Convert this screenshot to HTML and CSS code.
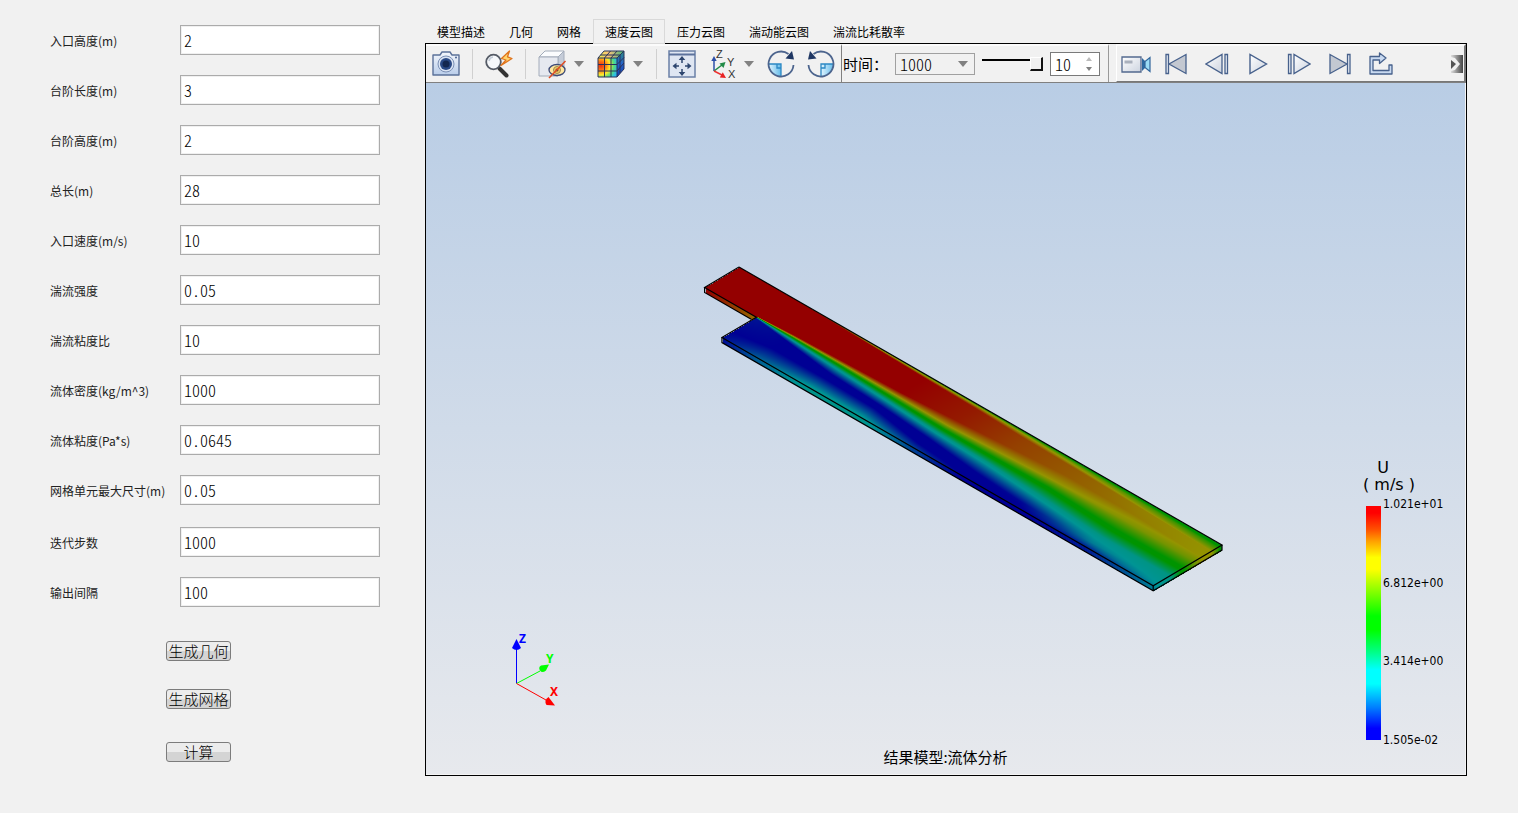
FILE: index.html
```html
<!DOCTYPE html>
<html lang="zh-CN">
<head>
<meta charset="utf-8">
<title>流体分析</title>
<link rel="stylesheet" href="styles.css">
</head>
<body>
<main class="app">
  <form class="panel">
    <div class="fields">
      <div class="field"><label for="inlet-h">入口高度(m)</label><input id="inlet-h" type="text" value="2"></div>
      <div class="field"><label for="step-l">台阶长度(m)</label><input id="step-l" type="text" value="3"></div>
      <div class="field"><label for="step-h">台阶高度(m)</label><input id="step-h" type="text" value="2"></div>
      <div class="field"><label for="total">总长(m)</label><input id="total" type="text" value="28"></div>
      <div class="field"><label for="speed">入口速度(m/s)</label><input id="speed" type="text" value="10"></div>
      <div class="field"><label for="turb">湍流强度</label><input id="turb" type="text" value="0.05"></div>
      <div class="field"><label for="ratio">湍流粘度比</label><input id="ratio" type="text" value="10"></div>
      <div class="field"><label for="density">流体密度(kg/m^3)</label><input id="density" type="text" value="1000"></div>
      <div class="field"><label for="visc">流体粘度(Pa*s)</label><input id="visc" type="text" value="0.0645"></div>
      <div class="field"><label for="mesh">网格单元最大尺寸(m)</label><input id="mesh" type="text" value="0.05"></div>
    </div>
    <div class="fields">
      <div class="field"><label for="iter">迭代步数</label><input id="iter" type="text" value="1000"></div>
      <div class="field"><label for="interval">输出间隔</label><input id="interval" type="text" value="100"></div>
    </div>
    <div class="actions">
      <button type="button" class="action">生成几何</button>
      <button type="button" class="action">生成网格</button>
      <button type="button" class="action action-run">计算</button>
    </div>
  </form>

  <section class="results">
    <div class="tabs" role="tablist">
      <button type="button" role="tab" class="tab">模型描述</button>
      <button type="button" role="tab" class="tab">几何</button>
      <button type="button" role="tab" class="tab">网格</button>
      <button type="button" role="tab" class="tab tab-active" aria-selected="true">速度云图</button>
      <button type="button" role="tab" class="tab">压力云图</button>
      <button type="button" role="tab" class="tab">湍动能云图</button>
      <button type="button" role="tab" class="tab">湍流比耗散率</button>
    </div>

    <div class="viewer">
      <div class="toolbar">
        <div class="bar bar-view">
          <button type="button" class="tool" aria-label="截图">
            <svg width="28" height="26" viewBox="0 0 28 26">
              <defs><linearGradient id="cam" x1="0" y1="0" x2="0" y2="1"><stop offset="0" stop-color="#f4f7fc"/><stop offset="1" stop-color="#b9cdea"/></linearGradient></defs>
              <path d="M1 4h7l2-3h8l2 3h7v20H1z" fill="url(#cam)" stroke="#5b7199" stroke-width="1.4" stroke-linejoin="round"/>
              <circle cx="14" cy="13" r="8" fill="#d9e3f3" stroke="#7b90b5"/>
              <circle cx="14" cy="13" r="6" fill="#2a4a86"/>
              <circle cx="14" cy="13" r="3.500" fill="#142850"/>
              <circle cx="24" cy="6.500" r="1" fill="#46608f"/>
            </svg>
          </button>
          <span class="sep"></span>
          <button type="button" class="tool" aria-label="快速缩放">
            <svg width="30" height="28" viewBox="0 0 30 28">
              <path d="M15.500 18.500l7 7" stroke="#333" stroke-width="4" stroke-linecap="round"/>
              <circle cx="9.500" cy="12" r="7.300" fill="#f6f8fb" stroke="#555b66" stroke-width="1.800"/>
              <path d="M5 11a5 5 0 0 1 4-4" fill="none" stroke="#c3ccd8" stroke-width="1.500"/>
              <path d="M25.500 1L17.500 8.500l4.500 1.500-5 5.500 11-7-4.500-1.700z" fill="#ffd36b" stroke="#e0741c" stroke-width="1.300" stroke-linejoin="round"/>
            </svg>
          </button>
          <span class="sep"></span>
          <button type="button" class="tool" aria-label="隐藏选择">
            <svg width="30" height="30" viewBox="0 0 30 30">
              <path d="M2 8l6-6h19l-6 6z" fill="#fbfcfe" stroke="#a3acba"/>
              <path d="M21 8l6-6v18l-6 7z" fill="#c5ccd8" stroke="#a3acba"/>
              <path d="M2 8h19v19H2z" fill="#e6e9f0" stroke="#a3acba"/>
              <ellipse cx="20" cy="21" rx="8" ry="5.500" fill="#ffe7a0" stroke="#3d4b78" stroke-width="1.300"/>
              <circle cx="20" cy="21" r="3.500" fill="#f5c95b" stroke="#9a8955"/>
              <circle cx="20" cy="21" r="1.500" fill="#544a3d"/>
              <path d="M28.500 12L12 29" stroke="#e04b22" stroke-width="1.500"/>
            </svg>
          </button>
          <button type="button" class="caret" aria-label="更多显示方式"></button>
          <button type="button" class="tool tool-next" aria-label="云图">
            <svg width="28" height="28" viewBox="0 0 28 28">
              <defs>
                <radialGradient id="heat" cx=".15" cy=".4" r="1"><stop offset="0" stop-color="#ee2a10"/><stop offset=".25" stop-color="#fb7a12"/><stop offset=".48" stop-color="#ffe92c"/><stop offset=".68" stop-color="#54df7a"/><stop offset=".9" stop-color="#27b8ee"/></radialGradient>
                <linearGradient id="heat-top"><stop offset="0" stop-color="#e5ef4a"/><stop offset=".4" stop-color="#ffc47a"/><stop offset="1" stop-color="#3bb078"/></linearGradient>
                <linearGradient id="heat-side" x1="0" y1="0" x2="0" y2="1"><stop offset="0" stop-color="#2c8a80"/><stop offset=".5" stop-color="#2463cc"/><stop offset="1" stop-color="#123ba8"/></linearGradient>
              </defs>
              <path d="M1 8l6-7h20l-7 7z" fill="url(#heat-top)"/>
              <path d="M20 8l7-7v18l-7 8z" fill="url(#heat-side)"/>
              <path d="M1 8h19v19H1z" fill="url(#heat)"/>
              <path d="M1 8l6-7h20v18l-7 8H1zM1 8h19v19M20 8l7-7M1 14.500h19l7-7M1 21h19l7-8M7.500 27V8l6-7M14 27V8l6-7M3.500 5h19.500v18" fill="none" stroke="#29335a" stroke-width="1"/>
            </svg>
          </button>
          <button type="button" class="caret" aria-label="更多云图"></button>
          <span class="sep sep-wide"></span>
          <button type="button" class="tool" aria-label="适应窗口">
            <svg width="28" height="28" viewBox="0 0 28 28">
              <rect x="1" y="1" width="26" height="26" fill="#dfe6f2" stroke="#6b80a7" stroke-width="1.500"/>
              <path d="M1 4.500h26" stroke="#5c729c" stroke-width="2"/>
              <path d="M14 6l3.300 4h-6.600zM14 26l3.300-4h-6.600zM4.500 16l4-3.300v6.600zM23.500 16l-4-3.300v6.600z" fill="#2e466f"/>
              <path d="M14 9v4M14 19v4M7 16h4M17 16h4" stroke="#2e466f" stroke-width="1.500"/>
            </svg>
          </button>
          <button type="button" class="tool" aria-label="视图方向">
            <svg width="28" height="36" viewBox="0 -4 28 36" class="axis-icon">
              <path d="M6 21V9" stroke="#2d4fa8" stroke-width="1.500"/><path d="M6 6l-2.700 5h5.400z" fill="#2d4fa8"/>
              <path d="M6 21l8-6" stroke="#218b47" stroke-width="1.500"/><path d="M17.500 12l-6 1.500 4 4.500z" fill="#218b47"/>
              <path d="M6 21l8 4" stroke="#e33" stroke-width="1.500"/><path d="M18 28l-6.200-.4 3-5.400z" fill="#e82222"/>
              <text x="8" y="8">Z</text><text x="19" y="16">Y</text><text x="20" y="28">X</text>
            </svg>
          </button>
          <button type="button" class="caret" aria-label="更多视图"></button>
          <button type="button" class="tool tool-next" aria-label="顺时针旋转">
            <svg width="28" height="28" viewBox="0 0 28 28">
              <defs><linearGradient id="wedge"><stop offset="0" stop-color="#e2f5fe"/><stop offset="1" stop-color="#64bbea"/></linearGradient></defs>
              <path d="M1.500 14h12.500v12.500A12.500 12.500 0 0 1 1.500 14z" fill="url(#wedge)"/>
              <path d="M2 14h12v12M10 14v4h4" fill="none" stroke="#2b88c4" stroke-width="1.300"/>
              <path d="M21.500 4A12.500 12.500 0 1 0 26.500 15" fill="none" stroke="#4c648d" stroke-width="1.800"/>
              <path d="M18.500 8.500l8.500 1-2-8.500z" fill="#1f3763"/>
            </svg>
          </button>
          <button type="button" class="tool tool-last" aria-label="逆时针旋转">
            <svg width="28" height="28" viewBox="0 0 28 28">
              <path d="M26.500 14H14v12.500A12.500 12.500 0 0 0 26.500 14z" fill="url(#wedge)"/>
              <path d="M26 14H14v12M18 14v4h-4" fill="none" stroke="#2b88c4" stroke-width="1.300"/>
              <path d="M6.500 4A12.500 12.500 0 1 1 1.500 15" fill="none" stroke="#4c648d" stroke-width="1.800"/>
              <path d="M9.500 8.500L1 9.500 3 1z" fill="#1f3763"/>
            </svg>
          </button>
        </div>

        <div class="bar bar-time">
          <label for="time" class="time-label">时间：</label>
          <span class="select-wrap"><select id="time" class="time-select"><option>1000</option></select></span>
          <input type="range" class="slider" aria-label="时间进度" min="0" max="10" value="10">
          <span class="spin">
            <input type="text" inputmode="numeric" class="spin-input" aria-label="帧" value="10">
            <svg width="8" height="16" viewBox="0 0 8 16"><path d="M4 1l3 4H1z" fill="#bbb"/><path d="M4 15l3-4H1z" fill="#808080"/></svg>
          </span>
        </div>

        <div class="bar bar-play">
          <button type="button" class="play play-record" aria-label="录制">
            <svg width="30" height="20" viewBox="0 0 30 20">
              <defs><linearGradient id="metal" x1="0" x2="1" y2="1"><stop offset="0" stop-color="#fff"/><stop offset="1" stop-color="#ccd3df"/></linearGradient></defs>
              <path d="M1 3h19v15H1z" fill="url(#metal)" stroke="#53698f" stroke-width="1.300"/>
              <path d="M3.500 6.500h8v3h-8z" fill="#aab1bd"/>
              <path d="M21 4l3.500 3.500v6L21 17z" fill="#2c68a0"/>
              <path d="M29 3.500v14l-5-4V7.500z" fill="#9bdcf6" stroke="#32669c" stroke-width="1.200"/>
            </svg>
          </button>
          <button type="button" class="play" aria-label="第一帧">
            <svg width="24" height="22" viewBox="0 0 24 22"><path d="M2 1.500h2.500v19H2z" fill="#e8edf5" stroke="#47618c" stroke-width="1.300"/><path d="M22 1.500v19L5 11z" fill="#c3c8d1" stroke="#47618c" stroke-width="1.300"/></svg>
          </button>
          <button type="button" class="play" aria-label="上一帧">
            <svg width="24" height="22" viewBox="0 0 24 22"><path d="M20 1.500h2.500v19H20z" fill="#e8edf5" stroke="#47618c" stroke-width="1.300"/><path d="M17 1.500v19L1 11z" fill="url(#metal)" stroke="#47618c" stroke-width="1.300"/></svg>
          </button>
          <button type="button" class="play" aria-label="播放">
            <svg width="20" height="22" viewBox="0 0 20 22"><path d="M2 1.500v19L18.500 11z" fill="url(#metal)" stroke="#47618c" stroke-width="1.400"/></svg>
          </button>
          <button type="button" class="play" aria-label="下一帧">
            <svg width="24" height="22" viewBox="0 0 24 22"><path d="M1.500 1.500H4v19H1.500z" fill="#e8edf5" stroke="#47618c" stroke-width="1.300"/><path d="M7 1.500v19L23 11z" fill="url(#metal)" stroke="#47618c" stroke-width="1.300"/></svg>
          </button>
          <button type="button" class="play" aria-label="最后一帧">
            <svg width="24" height="22" viewBox="0 0 24 22"><path d="M19.500 1.500H22v19h-2.500z" fill="#e8edf5" stroke="#47618c" stroke-width="1.300"/><path d="M2 1.500v19L19 11z" fill="#c3c8d1" stroke="#47618c" stroke-width="1.300"/></svg>
          </button>
          <button type="button" class="play" aria-label="循环">
            <svg width="26" height="24" viewBox="0 0 26 24"><path d="M2 22h22V13h-3v5.500H5V8h6.500v3.500L18 6l-6.500-5v3.500H2z" fill="#c9daf1" stroke="#47618c" stroke-width="1.300" stroke-linejoin="round"/></svg>
          </button>
          <button type="button" class="more" aria-label="更多">
            <svg width="12" height="18" viewBox="0 0 12 18">
              <defs><linearGradient id="dark"><stop offset="0" stop-color="#ddd"/><stop offset="1" stop-color="#444"/></linearGradient></defs>
              <path d="M0 0h12v18H0z" fill="url(#dark)"/><path d="M4 3l5 6-5 6-4 1V2z" fill="#f1f1f1"/><path d="M0 5l5 4-5 5z" fill="#555"/>
            </svg>
          </button>
        </div>
      </div>

      <div class="stage">
        <canvas class="model" width="522" height="330"></canvas>
        <svg class="triad" width="60" height="84" viewBox="0 0 60 84">
          <path d="M16.500 56V20" stroke="#00f" stroke-width="1"/><path d="M16.500 12l4.500 9q-4.500 4-9 0z" fill="#00f"/>
          <path d="M16.500 56.500L40 44" stroke="#0f0" stroke-width="1"/><path d="M49 37.500l-3 6q-4 3-6 0q-2-3 1-5z" fill="#0f0"/>
          <path d="M16.500 56.500L46 73" stroke="#f00" stroke-width="1"/><path d="M55 78.500l-8.500-.5q-3-5 2-8z" fill="#f00"/>
          <text x="19" y="16" fill="#00f">Z</text><text x="46" y="36" fill="#0f0">Y</text><text x="50" y="69" fill="#f00">X</text>
        </svg>
        <div class="legend">
          <div class="legend-title"><div class="legend-name">U</div><div>( m/s )</div></div>
          <div class="legend-body">
            <div class="legend-bar"></div>
            <div class="legend-ticks"><span>1.021e+01</span><span>6.812e+00</span><span>3.414e+00</span><span>1.505e-02</span></div>
          </div>
        </div>
        <p class="caption">结果模型:流体分析</p>
      </div>
    </div>
  </section>
</main>
<script src="model.js"></script>
</body>
</html>
```

FILE: styles.css
```css
* { box-sizing: border-box; }

body {
  margin: 0;
  background: #f1f1f1;
  color: #000;
  font-family: "Noto Sans CJK SC", sans-serif;
  font-size: 12px;
}

button {
  margin: 0;
  padding: 0;
  border: 0;
  background: none;
  color: inherit;
  font-family: inherit;
}

svg { display: block; flex: none; }

.app { display: flex; min-height: 100vh; }

/* parameter panel */
.panel {
  flex: none;
  width: 425px;
  padding: 25px 45px 0 50px;
}

.fields { display: grid; gap: 20px; }
.fields + .fields { margin-top: 22px; }

.field {
  display: grid;
  grid-template-columns: 130px 1fr;
  align-items: center;
  color: #222;
}
.field label { padding-top: 1px; line-height: 18px; white-space: nowrap; }

.field input {
  width: 100%;
  height: 30px;
  padding: 0 3px;
  border: 1px solid #ababab;
  border-radius: 0;
  box-shadow: inset 0 0 0 1px #f0f0f0;
  background: #fff;
}

.field input, .time-select, .spin-input {
  color: #000;
  font: 300 16px "Noto Sans CJK SC", sans-serif;
  font-feature-settings: "hwid";
}

.actions {
  display: flex;
  flex-direction: column;
  align-items: center;
  gap: 28px;
  margin-top: 34px;
  padding-right: 33px;
}

.action {
  width: 65px;
  height: 20px;
  border: 1px solid #7c7c7c;
  border-radius: 3px;
  background: linear-gradient(#ececec 50%, #d4d4d4 50%);
  font-size: 15px;
  font-weight: 300;
  line-height: 18px;
}
.action-run { margin-top: 5px; }

/* results */
.results {
  display: flex;
  flex: 1;
  flex-direction: column;
  min-width: 0;
  padding: 19px 51px 37px 0;
}

.tabs { display: flex; height: 25px; z-index: 1; margin-bottom: -1px; }

.tab {
  padding: 0 11px;
  border: 1px solid transparent;
  font-size: 12px;
  line-height: 23px;
}
.tab-active {
  border-color: #d9d9d9;
  background: #f1f1f1;
}

.viewer {
  display: flex;
  flex: 1;
  flex-direction: column;
  border: 1px solid #000;
}

.toolbar { display: flex; height: 39px; border-bottom: 1px solid #808080; }

.bar { display: flex; align-items: center; border-top: 2px solid #fbfbfb; }
.bar-view { flex: none; width: 416px; border-right: 1px solid #808080; }
.bar-time { flex: none; width: 267px; border-right: 1px solid #999; }
.bar-play {
  flex: 1;
  margin-left: 7px;
  border-left: 1px solid #fff;
  border-right: 2px solid #777;
  border-bottom: 1px solid #777;
}

.tool, .play { display: flex; align-items: center; justify-content: center; height: 36px; }
.tool { flex: none; width: 40px; }
.tool-next { margin-left: 6px; }
.tool-last { flex: 1; }
.play { flex: none; width: 41px; }
.play-record { width: 38px; }

.caret { display: flex; flex: none; justify-content: center; width: 13px; }
.caret::before {
  content: "";
  border: 5px solid transparent;
  border-top: 6px solid #828282;
  border-bottom: 0;
}

.sep { flex: none; width: 1px; height: 30px; margin: 0 6px; background: #d0d0d0; }
.sep-wide { margin: 0 5px 0 12px; }

.axis-icon { fill: #333; font: 11px "Liberation Sans", sans-serif; }

.time-label {
  flex: none;
  width: 53px;
  padding-left: 1px;
  font-size: 15px;
  line-height: 20px;
  white-space: nowrap;
}

.select-wrap { position: relative; flex: none; }
.select-wrap::after {
  content: "";
  position: absolute;
  top: 8px;
  right: 7px;
  border: 5px solid transparent;
  border-top: 6px solid #808080;
  border-bottom: 0;
  pointer-events: none;
}
.time-select {
  display: block;
  width: 80px;
  height: 22px;
  padding: 0 4px;
  border: 1px solid #a0a0a0;
  border-radius: 0;
  background: #f1f1f1;
  appearance: none;
  line-height: 20px;
}

.slider { width: 61px; height: 16px; margin: 0 7px; background: none; appearance: none; }
.slider::-webkit-slider-runnable-track {
  height: 14px;
  background: linear-gradient(#000, #000) 0 2px / 48px 2px no-repeat;
}
.slider::-webkit-slider-thumb {
  width: 13px;
  height: 14px;
  border: 1px solid #fff;
  border-right: 2px solid #111;
  border-bottom: 2px solid #111;
  background: #f1f1f1;
  appearance: none;
}

.spin {
  display: flex;
  align-items: center;
  width: 50px;
  height: 24px;
  padding-right: 6px;
  border: 1px solid #7a7a7a;
  background: #fff;
}
.spin-input { flex: 1; width: 0; height: 22px; padding: 0 0 0 4px; border: 0; background: none; }

.more { margin: 0 1px 0 auto; }

/* 3D view */
.stage {
  position: relative;
  flex: 1;
  min-height: 600px;
  border-right: 1px solid #f4f4f4;
  border-bottom: 1px solid #f4f4f4;
  background: linear-gradient(#b9cde5, #e7e9ed);
}

.model { position: absolute; top: 181px; left: 276px; }

.triad { position: absolute; bottom: 63px; left: 74px; }
.triad text { font: bold 12px "Noto Sans", sans-serif; }

.legend { position: absolute; right: 19px; bottom: 27px; }
.legend-title {
  width: 56px;
  font: 16px/17px "DejaVu Sans", sans-serif;
  text-align: center;
  white-space: nowrap;
}
.legend-name { padding-right: 12px; }
.legend-body { display: flex; gap: 2px; height: 250px; margin-top: 4px; padding-left: 5px; }
.legend-bar {
  width: 15px;
  height: 234px;
  margin-top: 9px;
  background: linear-gradient(#f00 0 3%, #ff5000 10%, #ffa000 15%, #ff0 22% 27%, #80ff00 37%, #0f0 47% 53%, #00ff80 62%, #0ff 70% 76%, #0080ff 86%, #00f 95%);
}
.legend-ticks {
  display: flex;
  flex-direction: column;
  justify-content: space-between;
  width: 63px;
  font: 12px/14px "DejaVu Sans Condensed", "DejaVu Sans", sans-serif;
}

.caption {
  position: absolute;
  right: 0;
  bottom: 6px;
  left: 0;
  margin: 0;
  font-size: 15px;
  line-height: 22px;
  text-align: center;
}
```

FILE: model.js
```javascript
// Velocity contour of the backward-facing step, drawn in isometric view.
// (u, v): metres along and across the channel.
const ORIGIN = [37, 3];
const U = [17.25, 9.93];
const V = [-17.2, 10.2];
const DEPTH = 5;
const LENGTH = 28, WIDTH = 4, STEP_U = 3, STEP_V = 2;

// Each station: u, then [v, relative speed] pairs from the upper wall to the lower wall.
const STATIONS = [
  [3, [[0, 1], [.01, 1], [.02, 1], [1.92, 1], [1.95, .77], [1.98, .5], [2, .27], [2.05, .06], [3.4, .03], [4, .05]]],
  [5, [[0, .9], [.02, .95], [.05, 1], [1.8, 1], [1.89, .77], [1.97, .5], [2.1, .27], [2.3, .03], [3.1, .03], [4, .18]]],
  [8, [[0, .7], [.05, .8], [.12, 1], [1.7, 1], [1.87, .77], [2.02, .5], [2.27, .27], [2.7, .02], [3.05, .02], [4, .3]]],
  [11, [[0, .62], [.08, .77], [.2, 1], [1.6, 1], [1.88, .77], [2.12, .5], [2.42, .27], [2.85, .02], [3.15, .03], [4, .3]]],
  [14, [[0, .55], [.1, .77], [.25, .96], [1.4, .96], [1.9, .77], [2.22, .5], [2.6, .27], [3.1, .02], [3.6, .02], [4, .14]]],
  [17, [[0, .5], [.14, .75], [.35, .9], [1.2, .9], [1.75, .77], [2.2, .5], [2.7, .27], [3.4, .03], [3.8, .02], [4, .02]]],
  [20, [[0, .48], [.17, .7], [.4, .86], [1, .86], [1.6, .77], [2.15, .5], [2.9, .27], [3.6, .04], [3.9, .02], [4, .02]]],
  [24, [[0, .45], [.2, .65], [.5, .8], [1, .81], [1.55, .74], [2.35, .5], [3.15, .28], [3.6, .22], [3.8, .15], [4, .06]]],
  [28, [[0, .42], [.25, .6], [.6, .77], [1.2, .77], [1.6, .7], [2.3, .5], [3, .32], [3.5, .28], [3.8, .26], [4, .22]]]
];
const COLORS = [[.03, 0, 0, 148], [.26, 0, 148, 148], [.32, 0, 148, 130], [.47, 0, 148, 0], [.53, 0, 148, 0], [.77, 148, 148, 0], [1, 148, 0, 0]];

const mix = (a, b, k) => a + (b - a) * k;

function speed(u, v) {
  if (u <= STEP_U) return v <= STEP_V ? 1 : .03;
  let i = 0;
  while (i < STATIONS.length - 2 && STATIONS[i + 1][0] < u) i++;
  const [u0, p] = STATIONS[i], [u1, q] = STATIONS[i + 1];
  const k = Math.min(1, (u - u0) / (u1 - u0));
  let pv = 0, ps = mix(p[0][1], q[0][1], k);
  for (let j = 1; j < p.length; j++) {
    const nv = mix(p[j][0], q[j][0], k), ns = mix(p[j][1], q[j][1], k);
    if (v <= nv) return mix(ps, ns, (v - pv) / (nv - pv));
    pv = nv; ps = ns;
  }
  return ps;
}

function color(t) {
  if (t <= COLORS[0][0]) return COLORS[0].slice(1);
  for (let i = 1; i < COLORS.length; i++) {
    const a = COLORS[i - 1], b = COLORS[i];
    if (t <= b[0]) {
      const k = (t - a[0]) / (b[0] - a[0]);
      return [mix(a[1], b[1], k), mix(a[2], b[2], k), mix(a[3], b[3], k)];
    }
  }
  return COLORS[COLORS.length - 1].slice(1);
}

const project = (u, v, drop = 0) => [
  ORIGIN[0] + u * U[0] + v * V[0],
  ORIGIN[1] + u * U[1] + v * V[1] + drop
];

function sample(x, y) {
  const det = U[0] * V[1] - V[0] * U[1];
  const at = d => {
    const dx = x - ORIGIN[0], dy = y - ORIGIN[1] - d;
    return [(V[1] * dx - V[0] * dy) / det, (U[0] * dy - U[1] * dx) / det];
  };
  const inside = (u, v) => u >= 0 && v >= 0 && u <= LENGTH && v <= (u < STEP_U ? STEP_V : WIDTH);
  for (let d = 0; d <= DEPTH; d++) {
    const [u, v] = at(d);
    if (!inside(u, v)) continue;
    if (d > 0 && u < STEP_U) return 1 - .17 * u / STEP_U;
    return speed(u, v);
  }
  return null;
}

const canvas = document.querySelector(".model");
const ctx = canvas.getContext("2d");
const image = ctx.createImageData(canvas.width, canvas.height);
for (let y = 0; y < canvas.height; y++) {
  for (let x = 0; x < canvas.width; x++) {
    const t = sample(x, y);
    if (t === null) continue;
    image.data.set([...color(t), 255], (y * canvas.width + x) * 4);
  }
}
ctx.putImageData(image, 0, 0);

const line = points => {
  ctx.beginPath();
  points.forEach(([x, y]) => ctx.lineTo(x, y));
  ctx.stroke();
};
ctx.strokeStyle = "#000";
ctx.lineWidth = 1.2;
line([project(0, 0), project(0, 2), project(3, 2), project(3, 4), project(28, 4), project(28, 0), project(0, 0)]);
line([project(0, 2), project(0, 2, DEPTH), project(2.7, 2, DEPTH)]);
line([project(3, 4), project(3, 4, DEPTH), project(28, 4, DEPTH), project(28, 0, DEPTH), project(28, 0)]);
line([project(28, 4), project(28, 4, DEPTH)]);
```
